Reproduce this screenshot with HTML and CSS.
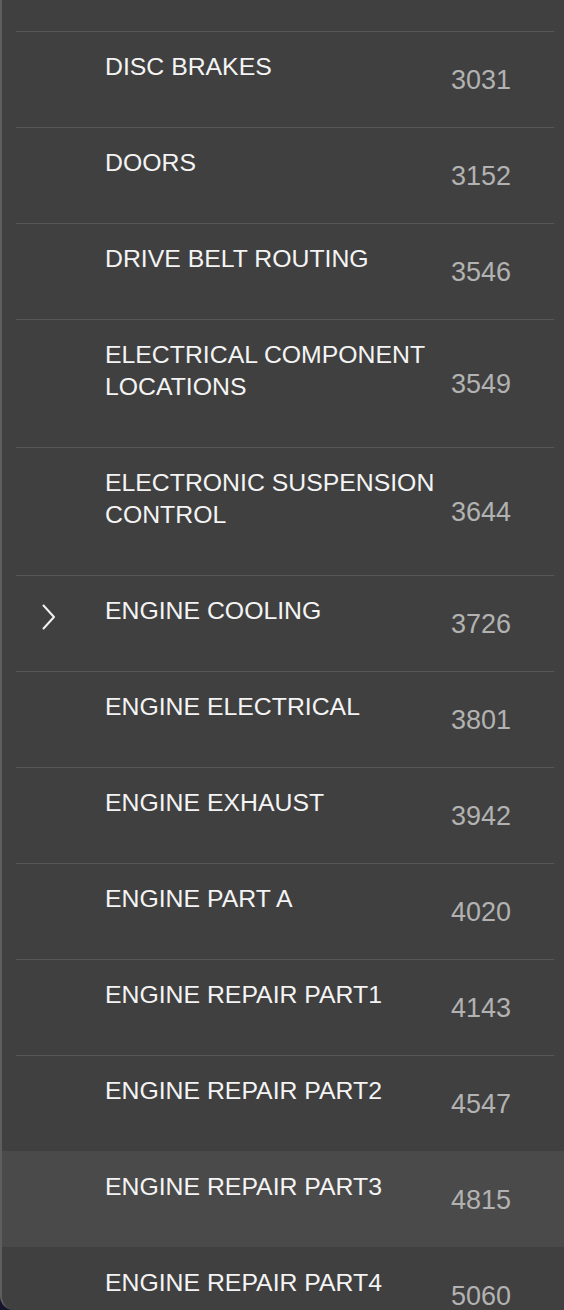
FILE: index.html
```html
<!DOCTYPE html>
<html lang="en">
<head>
<meta charset="utf-8">
<title>Sections</title>
<link rel="stylesheet" href="styles.css">
</head>
<body>
<div class="panel">
  <div class="spacer"></div>
  <ul class="list">
    <li class="row"><div class="inner"><span class="lead"></span><span class="title">DISC BRAKES</span><span class="num">3031</span></div></li>
    <li class="row"><div class="inner"><span class="lead"></span><span class="title">DOORS</span><span class="num">3152</span></div></li>
    <li class="row"><div class="inner"><span class="lead"></span><span class="title">DRIVE BELT ROUTING</span><span class="num">3546</span></div></li>
    <li class="row"><div class="inner"><span class="lead"></span><span class="title">ELECTRICAL COMPONENT LOCATIONS</span><span class="num">3549</span></div></li>
    <li class="row"><div class="inner"><span class="lead"></span><span class="title">ELECTRONIC SUSPENSION CONTROL</span><span class="num">3644</span></div></li>
    <li class="row"><div class="inner"><span class="lead"><svg class="chev" width="14" height="26" viewBox="0 0 14 26"><path d="M1.5 1.5 L12 13 L1.5 24.5" fill="none" stroke="#f2f2f2" stroke-width="2" stroke-linecap="round" stroke-linejoin="round"/></svg></span><span class="title">ENGINE COOLING</span><span class="num">3726</span></div></li>
    <li class="row"><div class="inner"><span class="lead"></span><span class="title">ENGINE ELECTRICAL</span><span class="num">3801</span></div></li>
    <li class="row"><div class="inner"><span class="lead"></span><span class="title">ENGINE EXHAUST</span><span class="num">3942</span></div></li>
    <li class="row"><div class="inner"><span class="lead"></span><span class="title">ENGINE PART A</span><span class="num">4020</span></div></li>
    <li class="row"><div class="inner"><span class="lead"></span><span class="title">ENGINE REPAIR PART1</span><span class="num">4143</span></div></li>
    <li class="row"><div class="inner"><span class="lead"></span><span class="title">ENGINE REPAIR PART2</span><span class="num">4547</span></div></li>
    <li class="row row-hl"><div class="inner inner-hl"><span class="lead"></span><span class="title">ENGINE REPAIR PART3</span><span class="num">4815</span></div></li>
    <li class="row"><div class="inner inner-after-hl"><span class="lead"></span><span class="title">ENGINE REPAIR PART4</span><span class="num">5060</span></div></li>
  </ul>
</div>
</body>
</html>
```

FILE: styles.css
```css
html, body {
  margin: 0;
  padding: 0;
}

body {
  background: #17152c;
  font-family: "Liberation Sans", Arial, sans-serif;
}

.panel {
  box-sizing: border-box;
  width: 564px;
  height: 1310px;
  overflow: hidden;
  background: #404040;
  border-left: 2px solid #5e5e5e;
  border-bottom-left-radius: 14px;
}

.spacer {
  height: 31px;
}

.list {
  list-style: none;
  margin: 0;
  padding: 0;
}

.row {
  display: block;
}

.row-hl {
  background: #4a4a4a;
}

.inner {
  display: flex;
  align-items: center;
  margin: 0 10px 0 14px;
  border-top: 1px solid #575757;
}

.inner-hl,
.inner-after-hl {
  border-top-color: transparent;
}

.lead {
  flex: none;
  align-self: flex-start;
  box-sizing: border-box;
  width: 89px;
  padding: 28px 0 0 26px;
}

.chev {
  display: block;
}

.title {
  flex: none;
  align-self: flex-start;
  width: 338px;
  padding: 19px 0 44px;
  font-size: 24.8px;
  line-height: 32px;
  color: #f4f4f4;
}

.num {
  margin-left: auto;
  margin-right: 43px;
  font-size: 27px;
  line-height: 32px;
  color: #b2b2b2;
}
```
